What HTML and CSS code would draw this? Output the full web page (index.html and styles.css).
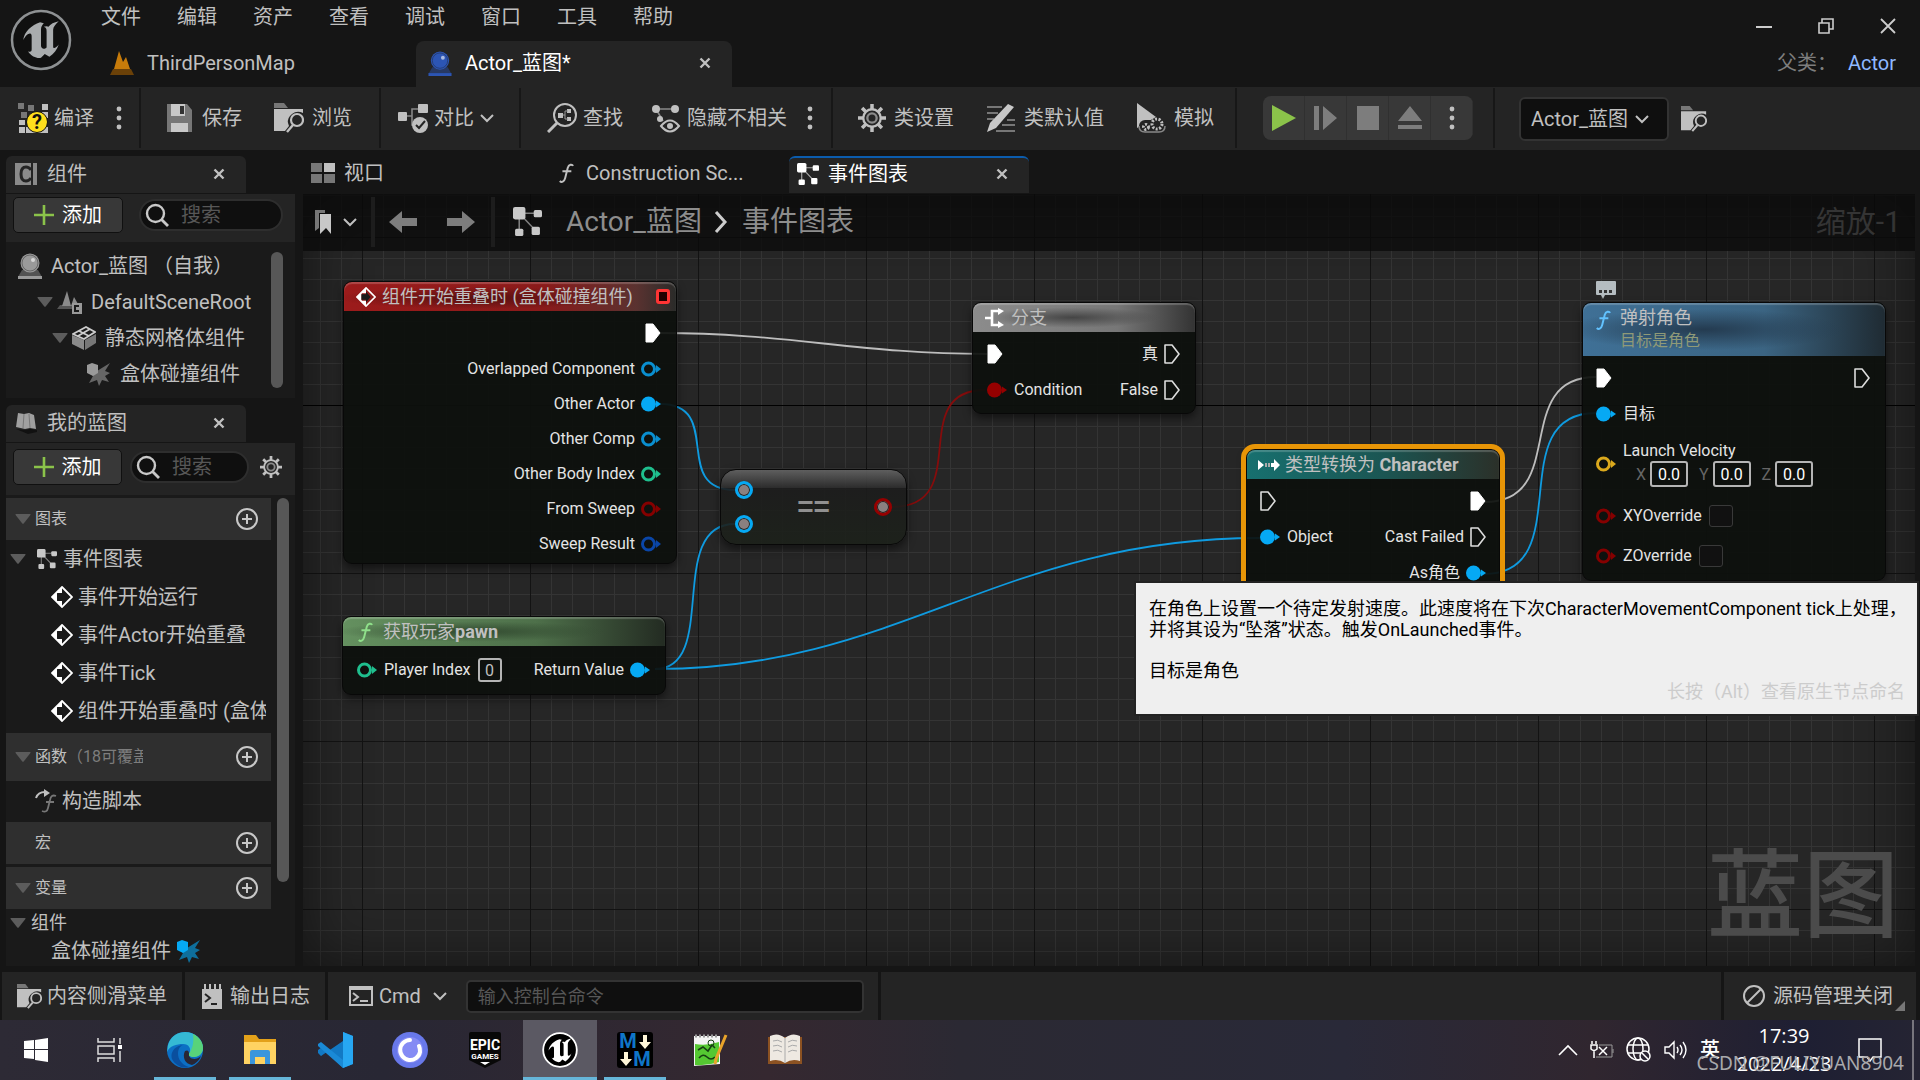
FILE: index.html
```html
<!DOCTYPE html>
<html lang="zh-CN">
<head>
  <meta charset="UTF-8" />
  <meta name="viewport" content="width=device-width, initial-scale=1.0"/>
  <title>Actor_蓝图</title>
  <link rel="stylesheet" href="styles.css">
</head>

<body>
  <!-- icons -->
  <svg class="defs" width="0" height="0" aria-hidden="true">
    <symbol id="i-x" viewBox="0 0 12 12"><path d="M1.5 1.5l9 9M10.5 1.5l-9 9" stroke="currentColor" stroke-width="2.4"/></symbol>
    <symbol id="i-down" viewBox="0 0 14 14"><path d="M1 4l6 6 6-6" fill="none" stroke="currentColor" stroke-width="2"/></symbol>
    <symbol id="i-tri" viewBox="0 0 16 10"><path d="M1 0h14q1 0 .4 1L8.700 9.500q-.7.700-1.400 0L.6 1Q0 0 1 0z" fill="#5c5c5c"/></symbol>
    <symbol id="i-dots" viewBox="0 0 6 24"><g fill="currentColor"><circle cx="3" cy="3" r="2.400"/><circle cx="3" cy="12" r="2.400"/><circle cx="3" cy="21" r="2.400"/></g></symbol>
    <symbol id="i-plus" viewBox="0 0 20 20"><path d="M10 0v20M0 10h20" stroke="#8bc34a" stroke-width="2.600"/></symbol>
    <symbol id="i-add" viewBox="0 0 24 24"><circle cx="12" cy="12" r="10" fill="none" stroke="#c8c8c8" stroke-width="2"/><path d="M12 7v10M7 12h10" stroke="#c8c8c8" stroke-width="2"/></symbol>
    <symbol id="i-search" viewBox="0 0 24 24"><circle cx="10.500" cy="10.500" r="8.500" fill="none" stroke="#c8c8c8" stroke-width="2.400"/><path d="M16.500 16.500L23 23" stroke="#c8c8c8" stroke-width="2.800"/></symbol>
    <symbol id="i-gear" viewBox="0 0 24 24"><path d="M12 0v5M12 19v5M0 12h5M19 12h5M3.500 3.500l3.600 3.600M16.900 16.900l3.600 3.600M20.500 3.500l-3.600 3.600M7.100 16.900l-3.600 3.600" stroke="#c0c0c0" stroke-width="3"/><circle cx="12" cy="12" r="7.500" fill="none" stroke="#c0c0c0" stroke-width="2"/><circle cx="12" cy="12" r="4" fill="none" stroke="#8a8a8a" stroke-width="2"/></symbol>
    <symbol id="i-graph" viewBox="0 0 28 28"><path d="M6 6h17M6 6v17M6 6l16 17" stroke="currentColor" stroke-width="1.500" opacity=".6"/><g fill="currentColor"><rect x="0" y="0" width="12" height="12" rx="2"/><rect x="20" y="3" width="8" height="7" rx="1.500"/><rect x="2" y="21" width="8" height="7" rx="1.500"/><rect x="18" y="19" width="8" height="8" rx="1.500"/></g></symbol>
    <symbol id="i-folder" viewBox="0 0 30 30"><path d="M0 0h10l4 5H0z" fill="#777"/><path d="M0 6h29v4q-6-3-11 1-5 4-4 9l1 3-4 5H0z" fill="#c0c0c0"/><circle cx="23" cy="17" r="6" fill="none" stroke="#c0c0c0" stroke-width="2.200"/><path d="M19 22l-6 7" stroke="#c0c0c0" stroke-width="2.400"/></symbol>
    <symbol id="i-event" viewBox="0 0 22 22"><path d="M11 1l10 10-10 10L1 11z" fill="none" stroke="#fff" stroke-width="1.800"/><path d="M11 1v6H6v8h5v6L1 11z" fill="#fff"/><path d="M6 8h5V5l5 6-5 6v-3H6z" fill="#1a1a1a"/></symbol>
    <symbol id="i-func" viewBox="0 0 18 22"><path d="M17 3c-1-2-5-2-6 2L8 17c-1 4-4 5-6 3M5 9h10" fill="none" stroke="currentColor" stroke-width="2.200"/></symbol>
    <symbol id="i-hit" viewBox="0 0 24 24"><path d="M24 1l-5 8 5 2-5 3 4 6-7-2-3 6-2-6-8 3 4-7-4-5h8z" fill="currentColor" opacity=".6"/><path d="M1 3l5-2 6 2v8l-5 3-6-3z" fill="currentColor"/></symbol>
    <symbol id="i-actor" viewBox="0 0 24 26"><path d="M4 17l-4 7h24l-4-7" fill="currentColor" opacity=".45"/><circle cx="12" cy="10" r="9.500" fill="currentColor"/><circle cx="12" cy="10" r="8" fill="none" stroke="#1a1a1a" stroke-opacity=".4"/><circle cx="15" cy="7" r="2" fill="#fff" opacity=".6"/><path d="M0 23h24v3H0z" fill="currentColor"/></symbol>
    <symbol id="pin-on" viewBox="0 0 20 16"><circle cx="7.500" cy="8" r="7.500" fill="currentColor"/><path d="M15 4.500l5 3.500-5 3.500z" fill="currentColor"/></symbol>
    <symbol id="pin-off" viewBox="0 0 20 16"><circle cx="7.500" cy="8" r="6" fill="none" stroke="currentColor" stroke-width="3"/><path d="M15 4l5 4-5 4z" fill="currentColor"/></symbol>
    <symbol id="exec-on" viewBox="0 0 16 20"><path d="M1 1h7l7 9-7 9H1z" fill="#fff" stroke="#fff" stroke-linejoin="round"/></symbol>
    <symbol id="exec-off" viewBox="0 0 16 20"><path d="M1 1h7l7 9-7 9H1z" fill="none" stroke="#ddd" stroke-width="1.600" stroke-linejoin="round"/></symbol>
    <symbol id="i-ue" viewBox="0 0 60 60"><path d="M29 12c-9 3-17 10-18 19 2-4 5-7 7-7 2 0 2 2 2 4v13c0 3-2 3-4 2 4 6 10 8 14 7l4-4 5 3c5-3 8-7 10-13-3 4-6 5-6 2V20c0-3 3-6 6-9-5 1-9 3-11 6-1-1-3-1-5 0 3 1 3 3 3 5v17c-2 2-6 2-6-2V20c0-3 1-5 3-7z" fill="currentColor"/></symbol>
  </svg>

  <header class="titlebar">
    <svg class="logo" viewBox="0 0 62 62"><circle cx="31" cy="31" r="29" fill="#101010" stroke="#8e9193" stroke-width="2.500"/><svg x="3" y="1" width="56" height="58" color="#a9acae"><use href="#i-ue"/></svg></svg>
    <div class="title-main">
      <nav class="menu">
        <a href="#">文件</a><a href="#">编辑</a><a href="#">资产</a><a href="#">查看</a><a href="#">调试</a><a href="#">窗口</a><a href="#">工具</a><a href="#">帮助</a>
      </nav>
      <div class="doc-tabs">
        <div class="doc-tab">
          <svg width="24" height="24" viewBox="0 0 24 24"><path d="M0 24l3-6h18l3 6z" fill="#6b4108"/><path d="M4 18L9 0l4 11 3-5 4 12z" fill="#c77b0a"/></svg>
          <span>ThirdPersonMap</span>
        </div>
        <div class="doc-tab active">
          <svg class="blue" width="24" height="25"><use href="#i-actor"/></svg>
          <span>Actor_蓝图*</span>
          <button class="close" aria-label="关闭"><svg width="12" height="12"><use href="#i-x"/></svg></button>
        </div>
      </div>
    </div>
    <div class="title-side">
      <div class="win-buttons">
        <button aria-label="最小化"><svg width="16" height="16" viewBox="0 0 16 16"><path d="M0 9h16" stroke="#ccc" stroke-width="2"/></svg></button>
        <button aria-label="还原"><svg width="16" height="16" viewBox="0 0 16 16"><path d="M1 5h10v10H1zM4 5V1h11v10h-4" fill="none" stroke="#ccc" stroke-width="1.600"/></svg></button>
        <button aria-label="关闭窗口"><svg width="16" height="16" viewBox="0 0 16 16"><path d="M1 1l14 14M15 1L1 15" stroke="#ccc" stroke-width="1.800"/></svg></button>
      </div>
      <p class="parent">父类： <a href="#">Actor</a></p>
    </div>
  </header>

  <div class="toolbar">
    <div class="group first">
      <button class="tool"><svg width="30" height="30" viewBox="0 0 30 30"><g fill="#c0c0c0"><path d="M24 1h6v6h-6zM1 17h6v5H1zM1 24h6v6H1zM8 24h22v6H8zM24 9h6v6h-6z"/></g><g fill="#777"><path d="M0 0h6v6H0zM10 2h6v6h-6zM3 9h6v6H3z"/></g><circle cx="19" cy="19" r="10.500" fill="#ffdf1c" stroke="#111"/><text x="19" y="26" class="question">?</text></svg><span>编译</span></button>
      <button class="dots" aria-label="编译选项"><svg width="6" height="24"><use href="#i-dots"/></svg></button>
    </div>
    <div class="group file">
      <button class="tool"><svg width="30" height="30" viewBox="0 0 30 30"><path d="M3 1h20l5 6v22H3z" fill="#777"/><path d="M7 1h14v12H7zM7 20h17v9H7z" fill="#c8c8c8"/><path d="M16 3h4v8h-4z" fill="#333"/></svg><span>保存</span></button>
      <button class="tool"><svg width="30" height="30"><use href="#i-folder"/></svg><span>浏览</span></button>
    </div>
    <div class="group narrow">
      <button class="tool"><svg width="30" height="30" viewBox="0 0 30 30"><path d="M8 13h6V6h8M14 13v9h3" fill="none" stroke="#888" stroke-width="1.600"/><g fill="#c0c0c0"><rect y="9" width="9" height="9" rx="1"/><rect x="20" y="1" width="10" height="9" rx="1"/><circle cx="22" cy="22" r="8"/></g><path d="M18 22l3 3 6-7" fill="none" stroke="#242424" stroke-width="2"/></svg><span>对比</span><svg width="14" height="14"><use href="#i-down"/></svg></button>
    </div>
    <div class="group tight">
      <button class="tool"><svg width="30" height="30" viewBox="0 0 30 30"><circle cx="18" cy="12" r="11" fill="none" stroke="#c0c0c0" stroke-width="2"/><path d="M10 20L1 29" stroke="#c0c0c0" stroke-width="3"/><path d="M11 10h5v5h-5zM20 6h4v4h-4zM20 14h4v4h-4z" fill="#c0c0c0"/><path d="M16 12h2V8h3M18 12v4h3" stroke="#999" fill="none"/></svg><span>查找</span></button>
      <button class="tool"><svg width="30" height="30" viewBox="0 0 30 30"><path d="M5 6h18M5 6l7 12" stroke="#888" stroke-width="1.600"/><g fill="#c0c0c0"><circle cx="5" cy="6" r="4"/><circle cx="24" cy="6" r="4"/><circle cx="9" cy="16" r="3"/></g><path d="M10 23q9-11 18 0-9 11-18 0z" fill="#242424" stroke="#c0c0c0" stroke-width="2"/><circle cx="19" cy="23" r="3" fill="#c0c0c0"/></svg><span>隐藏不相关</span></button>
      <button class="dots" aria-label="隐藏选项"><svg width="6" height="24"><use href="#i-dots"/></svg></button>
    </div>
    <div class="group short">
      <button class="tool"><svg width="28" height="28"><use href="#i-gear"/></svg><span>类设置</span></button>
      <button class="tool"><svg width="30" height="30" viewBox="0 0 30 30"><path d="M1 4h15M1 10h11M1 16h7M16 22h13M21 17h8M10 28h19" stroke="#777" stroke-width="1.800"/><path d="M22 1l6 3L10 25l-9 4 3-9z" fill="#c8c8c8"/></svg><span>类默认值</span></button>
      <button class="tool"><svg width="30" height="30" viewBox="0 0 30 30"><path d="M1 0l19 14L1 25z" fill="#c0c0c0"/><rect x="3" y="17" width="26" height="13" rx="6" fill="#242424"/><path d="M3 23q0 6 6 6h14q6 0 6-6" fill="none" stroke="#888" stroke-width="1.500"/><g fill="none" stroke="#c0c0c0" stroke-width="3" stroke-dasharray="2 1.500"><circle cx="21" cy="21" r="5"/><circle cx="10" cy="24" r="2.500"/></g></svg><span>模拟</span></button>
    </div>
    <div class="group play">
      <div class="playbox">
        <button aria-label="播放"><svg width="26" height="26" viewBox="0 0 26 26"><path d="M1 0l24 13L1 26z" fill="#8bc34a"/></svg></button>
        <button aria-label="单步"><svg width="26" height="26" viewBox="0 0 26 26"><path d="M1 1h5v24H1zM10 1l14 12-14 12z" fill="#7d7d7d"/></svg></button>
        <button aria-label="停止"><svg width="26" height="26" viewBox="0 0 26 26"><path d="M2 1h22v24H2z" fill="#7d7d7d"/></svg></button>
        <button aria-label="弹出"><svg width="26" height="26" viewBox="0 0 26 26"><path d="M13 1l12 15H1zM1 20h24v4H1z" fill="#7d7d7d"/></svg></button>
        <button aria-label="播放选项"><svg width="6" height="26"><use href="#i-dots"/></svg></button>
      </div>
    </div>
    <div class="debug">
      <span class="select-wrap"><select aria-label="调试对象"><option>Actor_蓝图</option></select><svg width="14" height="14"><use href="#i-down"/></svg></span>
      <svg width="26" height="26"><use href="#i-folder"/></svg>
    </div>
  </div>

  <main class="workspace">
    <aside class="sidebar">
      <section>
        <div class="panel-tab">
          <svg width="22" height="22" viewBox="0 0 22 22"><path d="M0 0h22v22H0z" fill="#8a8a8a"/><path d="M16 7q-2-3-5-3-5 0-5 7t5 7q3 0 5-3" fill="none" stroke="#242424" stroke-width="3"/><path d="M17 0v22" stroke="#242424" stroke-width="2"/></svg>
          <h2>组件</h2>
          <button class="close" aria-label="关闭组件"><svg width="12" height="12"><use href="#i-x"/></svg></button>
        </div>
        <div class="panel-head">
          <button class="add"><svg width="20" height="20"><use href="#i-plus"/></svg>添加</button>
          <label class="search wide"><svg width="24" height="24"><use href="#i-search"/></svg><input type="text" placeholder="搜索" aria-label="搜索组件"></label>
        </div>
        <div class="panel-body components">
          <ul class="tree">
            <li class="l0"><svg class="grey" width="24" height="26"><use href="#i-actor"/></svg>Actor_蓝图 （自我）</li>
            <li class="l1"><svg class="tri" width="16" height="10"><use href="#i-tri"/></svg><svg width="25" height="24" viewBox="0 0 25 24"><path d="M0 19l3-4h14l3 4z" fill="#555"/><path d="M5 16L10 1l4 15zM14 16l3-9 4 7z" fill="#8a8a8a"/><path d="M15 13h10v11H15z" fill="#999"/><path d="M22 16h-4v5h4" fill="none" stroke="#1a1a1a" stroke-width="2"/></svg>DefaultSceneRoot</li>
            <li class="l2"><svg class="tri" width="16" height="10"><use href="#i-tri"/></svg><svg width="24" height="24" viewBox="0 0 24 24"><path d="M0 9l12 5v10L0 18z" fill="#8a8a8a"/><path d="M24 8l-11 6v10l11-7z" fill="#777"/><path d="M1 8l13-7 9 5-11 7zM7 5l10 5M6 10l12-7" fill="none" stroke="#ccc" stroke-width="1.800"/></svg>静态网格体组件</li>
            <li class="l3"><svg class="grey" width="24" height="24"><use href="#i-hit"/></svg>盒体碰撞组件</li>
          </ul>
          <div class="scrollbar"></div>
        </div>
      </section>

      <section class="blueprint">
        <div class="panel-tab">
          <svg width="22" height="22" viewBox="0 0 22 22"><path d="M3 1l6 1 5-1 5 2 2 14-6-1-5 1-9-2z" fill="#a0a0a0"/><path d="M9 2L8 16M14 2l1 14" stroke="#777"/><path d="M1 17l9 1 5-1 7 1v2l-9 2z" fill="#111"/></svg>
          <h2>我的蓝图</h2>
          <button class="close" aria-label="关闭我的蓝图"><svg width="12" height="12"><use href="#i-x"/></svg></button>
        </div>
        <div class="panel-head tall">
          <button class="add"><svg width="20" height="20"><use href="#i-plus"/></svg>添加</button>
          <label class="search"><svg width="24" height="24"><use href="#i-search"/></svg><input type="text" placeholder="搜索" aria-label="搜索蓝图"></label>
          <button class="icon-btn" aria-label="设置"><svg width="22" height="22"><use href="#i-gear"/></svg></button>
        </div>
        <div class="panel-body list">
          <div class="list-main">
            <div class="cat"><svg class="tri" width="16" height="10"><use href="#i-tri"/></svg><h3>图表</h3><button class="icon-btn" aria-label="添加图表"><svg width="24" height="24"><use href="#i-add"/></svg></button></div>
            <ul>
              <li class="root"><svg class="tri" width="16" height="10"><use href="#i-tri"/></svg><svg class="light" width="22" height="20"><use href="#i-graph"/></svg>事件图表</li>
              <li><svg width="22" height="22"><use href="#i-event"/></svg>事件开始运行</li>
              <li><svg width="22" height="22"><use href="#i-event"/></svg>事件Actor开始重叠</li>
              <li><svg width="22" height="22"><use href="#i-event"/></svg>事件Tick</li>
              <li><svg width="22" height="22"><use href="#i-event"/></svg><span class="clip">组件开始重叠时 (盒体碰撞组件)</span></li>
            </ul>
            <div class="cat high"><svg class="tri" width="16" height="10"><use href="#i-tri"/></svg><h3>函数</h3><span class="sub">（18可覆盖）</span><button class="icon-btn" aria-label="添加函数"><svg width="24" height="24"><use href="#i-add"/></svg></button></div>
            <ul>
              <li class="fn"><svg width="22" height="24" viewBox="0 0 22 24"><path d="M1 9q2-6 9-6" fill="none" stroke="#c0c0c0" stroke-width="2"/><path d="M9 0l6 4-6 4z" fill="#c0c0c0"/><path d="M21 7q-5-2-6 4l-2 8q-1 5-6 3M11 13h8" fill="none" stroke="#777" stroke-width="1.800"/></svg>构造脚本</li>
            </ul>
            <div class="cat"><span class="tri"></span><h3>宏</h3><button class="icon-btn" aria-label="添加宏"><svg width="24" height="24"><use href="#i-add"/></svg></button></div>
            <div class="cat spaced"><svg class="tri" width="16" height="10"><use href="#i-tri"/></svg><h3>变量</h3><button class="icon-btn" aria-label="添加变量"><svg width="24" height="24"><use href="#i-add"/></svg></button></div>
            <ul class="vars">
              <li class="root"><svg class="tri" width="16" height="10"><use href="#i-tri"/></svg>组件</li>
              <li>盒体碰撞组件<svg class="cyan" width="24" height="24"><use href="#i-hit"/></svg></li>
            </ul>
          </div>
          <div class="scrollbar"></div>
        </div>
      </section>
    </aside>

    <section class="editor">
      <div class="editor-tabs">
        <div class="etab"><svg width="24" height="20" viewBox="0 0 24 20"><path d="M0 0h11v9H0zM0 11h11v9H0zM13 11h11v9H13z" fill="#777"/><path d="M13 0h11v9H13z" fill="#c0c0c0"/></svg><span>视口</span></div>
        <div class="etab"><svg width="16" height="22"><use href="#i-func"/></svg><span>Construction Sc...</span></div>
        <div class="etab active"><svg width="22" height="22"><use href="#i-graph"/></svg><span>事件图表</span><button class="close" aria-label="关闭事件图表"><svg width="12" height="12"><use href="#i-x"/></svg></button></div>
      </div>

      <div class="graph">
        <div class="canvas">
          <svg class="wires" width="1617" height="772" fill="none" stroke-width="1.800">
            <g transform="translate(-303 -194)">
              <path d="M660 333C790 333 857 354 987 354" stroke="#bdbdbd"/>
              <path d="M660 404C725 404 670 490 735 490" stroke="#0f9be0"/>
              <path d="M655 669C720 669 665 524 735 524" stroke="#0f9be0"/>
              <path d="M655 669C900 669 1000 538 1260 538" stroke="#0f9be0"/>
              <path d="M892 507C975 507 905 390 985 390" stroke="#850c0c"/>
              <path d="M1485 502C1570 502 1510 377 1596 377" stroke="#bdbdbd"/>
              <path d="M1484 574C1580 574 1500 413 1596 413" stroke="#0f9be0"/>
            </g>
          </svg>
          <div class="vignette"></div>
          <div class="watermark">蓝图</div>

          <article class="node overlap">
            <h4 class="red"><svg width="20" height="20"><use href="#i-event"/></svg>组件开始重叠时 (盒体碰撞组件)<i class="delegate"></i></h4>
            <div class="row out"><svg width="16" height="20"><use href="#exec-on"/></svg></div>
            <div class="row out low">Overlapped Component<svg class="obj" width="20" height="16"><use href="#pin-off"/></svg></div>
            <div class="row out low">Other Actor<svg class="obj on" width="20" height="16"><use href="#pin-on"/></svg></div>
            <div class="row out low">Other Comp<svg class="obj" width="20" height="16"><use href="#pin-off"/></svg></div>
            <div class="row out low">Other Body Index<svg class="int" width="20" height="16"><use href="#pin-off"/></svg></div>
            <div class="row out low">From Sweep<svg class="bool" width="20" height="16"><use href="#pin-off"/></svg></div>
            <div class="row out low">Sweep Result<svg class="struct" width="20" height="16"><use href="#pin-off"/></svg></div>
          </article>

          <article class="node equal">
            <div class="eq-pins"><i class="dot"></i><i class="dot"></i></div>
            <b>==</b>
            <i class="dot bad"></i>
          </article>

          <article class="node pawn">
            <h4 class="green"><svg width="16" height="20"><use href="#i-func"/></svg><span>获取玩家<b>pawn</b></span></h4>
            <div class="row">
              <label class="in"><svg class="int" width="20" height="16"><use href="#pin-off"/></svg>Player Index <input class="num one" type="text" value="0"></label>
              <span class="end">Return Value<svg class="obj on" width="20" height="16"><use href="#pin-on"/></svg></span>
            </div>
          </article>

          <article class="node branch">
            <h4 class="gray"><svg width="20" height="20" viewBox="0 0 20 20"><path d="M0 10h7M15 3H7v14h8" fill="none" stroke="#fff" stroke-width="2.600"/><path d="M13 0l6 3-6 4zM13 13l6 4-6 3z" fill="#fff"/></svg>分支</h4>
            <div class="row"><svg width="16" height="20"><use href="#exec-on"/></svg><span class="end">真<svg width="16" height="20"><use href="#exec-off"/></svg></span></div>
            <div class="row"><span class="in"><svg class="bool on" width="20" height="16"><use href="#pin-on"/></svg>Condition</span><span class="end">False<svg width="16" height="20"><use href="#exec-off"/></svg></span></div>
          </article>

          <article class="node cast">
            <h4 class="teal"><svg width="22" height="12" viewBox="0 0 22 12"><path d="M0 1l6 5-6 5zM13 4h3V0l6 6-6 6V8h-3z" fill="#fff"/><path d="M7 4h2v4H7zM10 4h2v4h-2z" fill="#aaa"/></svg><span>类型转换为 <b>Character</b></span></h4>
            <div class="row"><svg width="16" height="20"><use href="#exec-off"/></svg><span class="end"><svg width="16" height="20"><use href="#exec-on"/></svg></span></div>
            <div class="row"><span class="in"><svg class="obj on" width="20" height="16"><use href="#pin-on"/></svg>Object</span><span class="end">Cast Failed<svg width="16" height="20"><use href="#exec-off"/></svg></span></div>
            <div class="row"><span class="end">As角色<svg class="obj on" width="20" height="16"><use href="#pin-on"/></svg></span></div>
          </article>

          <svg class="bubble" width="20" height="18" viewBox="0 0 20 18"><path d="M1 0h18q1 0 1 1v12q0 1-1 1H9l-2 4-2-4H1q-1 0-1-1V1q0-1 1-1z" fill="#b4bcc0"/><path d="M3 9h3v3H3zM8 9h3v3H8zM13 9h3v3h-3z" fill="#333"/></svg>
          <article class="node launch">
            <h4 class="blue-head"><svg width="16" height="20"><use href="#i-func"/></svg><span>弹射角色<small>目标是角色</small></span></h4>
            <div class="row"><svg width="16" height="20"><use href="#exec-on"/></svg><span class="end"><svg width="16" height="20"><use href="#exec-off"/></svg></span></div>
            <div class="row"><span class="in"><svg class="obj on" width="20" height="16"><use href="#pin-on"/></svg>目标</span></div>
            <div class="row vec">
              <svg class="vector" width="20" height="16"><use href="#pin-off"/></svg>
              <div>
                <span>Launch Velocity</span>
                <div class="xyz"><label>X <input class="num" type="text" value="0.0"></label><label>Y <input class="num" type="text" value="0.0"></label><label>Z <input class="num" type="text" value="0.0"></label></div>
              </div>
            </div>
            <div class="row check"><label class="in"><svg class="bool" width="20" height="16"><use href="#pin-off"/></svg>XYOverride<input type="checkbox"></label></div>
            <div class="row check"><label class="in"><svg class="bool" width="20" height="16"><use href="#pin-off"/></svg>ZOverride<input type="checkbox"></label></div>
          </article>
        </div>

        <div class="crumbs">
          <button class="crumb-btn" aria-label="书签"><svg width="16" height="24" viewBox="0 0 16 24"><path d="M0 0h10v3H4v15l-4 3z" fill="#777"/><path d="M5 4h11v20l-5-6-6 6z" fill="#c8c8c8"/></svg><svg width="14" height="14"><use href="#i-down"/></svg></button>
          <button class="crumb-btn arrows" aria-label="后退"><svg width="28" height="22" viewBox="0 0 28 22"><path d="M0 11L13 0v7h15v8H13v7z" fill="#7d7d7d"/></svg></button>
          <button class="crumb-btn" aria-label="前进"><svg width="28" height="22" viewBox="0 0 28 22"><path d="M28 11L15 0v7H0v8h15v7z" fill="#7d7d7d"/></svg></button>
          <div class="path">
            <svg width="33" height="29"><use href="#i-graph"/></svg>
            <a href="#">Actor_蓝图</a>
            <svg width="14" height="22" viewBox="0 0 14 22"><path d="M2 1l9 10-9 10" fill="none" stroke="#ccc" stroke-width="3"/></svg>
            <a href="#">事件图表</a>
          </div>
          <span class="zoom">缩放-1</span>
        </div>

        <div class="tooltip" role="tooltip">
          <p>在角色上设置一个待定发射速度。此速度将在下次CharacterMovementComponent tick上处理，<br>并将其设为“坠落”状态。触发OnLaunched事件。</p>
          <p>目标是角色</p>
          <p class="hint">长按（Alt）查看原生节点命名</p>
        </div>
      </div>
    </section>
  </main>

  <footer class="status">
    <button class="seg drawer"><svg width="25" height="25"><use href="#i-folder"/></svg>内容侧滑菜单</button>
    <button class="seg log"><svg width="20" height="25" viewBox="0 0 20 25"><path d="M0 5h2V0h2v5h3V0h2v5h3V0h2v5h3V0h2v5h1v20H0z" fill="#c0c0c0"/><path d="M3 10l5 4-5 4M9 20h6" fill="none" stroke="#242424" stroke-width="2"/></svg>输出日志</button>
    <div class="seg cmd">
      <button><svg width="24" height="20" viewBox="0 0 24 20"><path d="M1 1h22v18H1zM1 3h22" fill="none" stroke="#c0c0c0" stroke-width="2"/><path d="M4 7l5 4-5 4M11 15h8" fill="none" stroke="#c0c0c0" stroke-width="2"/></svg>Cmd<svg class="gap" width="14" height="14"><use href="#i-down"/></svg></button>
      <input type="text" placeholder="输入控制台命令" aria-label="控制台命令">
    </div>
    <div class="seg fill"></div>
    <button class="seg source"><svg width="24" height="24" viewBox="0 0 24 24"><circle cx="12" cy="12" r="10" fill="none" stroke="#c0c0c0" stroke-width="2"/><path d="M5 19L19 5" stroke="#c0c0c0" stroke-width="2"/></svg>源码管理关闭<i></i></button>
  </footer>

  <div class="taskbar">
    <button aria-label="开始"><svg width="24" height="24" viewBox="0 0 24 24"><path d="M0 3l10-1v9H0zM11 2l13-2v11H11zM0 12h10v9L0 20zM11 12h13v12l-13-2z" fill="#fff"/></svg></button>
    <button aria-label="任务视图"><svg width="26" height="26" viewBox="0 0 26 26"><path d="M1 1v4h16V1M1 25v-4h16v4M1 9h16v8H1zM23 1v6M23 14v11" fill="none" stroke="#ddd" stroke-width="1.500"/><path d="M21 8h4v4h-4z" fill="#fff"/></svg></button>
    <button class="open" aria-label="Edge"><svg width="36" height="36" viewBox="0 0 36 36"><circle cx="18" cy="18" r="18" fill="#0c6fc4"/><path d="M1 13C4 3 12 0 18 0c10 0 18 7 18 16 0 5-4 9-9 9-4 0-6-2-5-3 3-5 0-10-6-10C10 12 2 14 0 20z" fill="#35b9d4"/><path d="M26 2c6 3 10 8 10 14 0 5-4 9-9 9-4 0-6-2-5-3 4-6 5-13 4-20z" fill="#58d37a"/><path d="M16 13c-7 2-8 18 6 22-7 2-14-2-17-8-2-6 2-13 11-14z" fill="#0a4f9e"/><path d="M22 22c-1 5 7 7 12 2-2 5-6 8-9 9-7-1-10-8-7-14q4-2 4 3z" fill="#292634"/></svg></button>
    <button class="open" aria-label="文件资源管理器"><svg width="34" height="30" viewBox="0 0 34 30"><path d="M1 0h12l3 4h17v10H1z" fill="#e3a11a"/><path d="M1 7h32v22H1z" fill="#ffd362"/><path d="M7 29V17q0-2 2-2h16q2 0 2 2v12h-5v-7H12v7z" fill="#3a96dd"/></svg></button>
    <button aria-label="VS Code"><svg width="36" height="36" viewBox="0 0 36 36"><path d="M26 0l10 4v28l-10 4L5 15l-4 3v3l3 3L26 9v18z" fill="#1279c4"/><path d="M26 0l10 4v28l-10 4z" fill="#27a7f2"/><path d="M1 12l3-2 22 18v8L1 14z" fill="#1a8ad6"/></svg></button>
    <button aria-label="浏览器"><svg width="36" height="36" viewBox="0 0 36 36"><circle cx="18" cy="18" r="18" fill="#6878ea"/><circle cx="18" cy="18" r="13" fill="#858bf4"/><path d="M18 8a10 10 0 1 0 10 12q0-4-1-6" fill="none" stroke="#fff" stroke-width="4" stroke-linecap="round"/></svg></button>
    <button aria-label="Epic Games"><svg width="32" height="36" viewBox="0 0 32 36"><path d="M2 0h28q2 0 2 2v26L16 36 0 28V2q0-2 2-2z" fill="#080808"/><text x="16" y="18" class="epic">EPIC</text><text x="16" y="27" class="games">GAMES</text><path d="M11 30h10l-5 3z" fill="#fff"/></svg></button>
    <button class="open current" aria-label="Unreal Editor"><svg width="36" height="36" viewBox="0 0 60 60" color="#fff"><circle cx="30" cy="30" r="28" fill="#000" stroke="#fff" stroke-width="3"/><use href="#i-ue"/></svg></button>
    <button class="open" aria-label="Markdown"><svg width="36" height="36" viewBox="0 0 36 36"><rect width="36" height="36" rx="3" fill="#000"/><text x="11" y="16" class="mm">M</text><text x="25" y="34" class="mm">M</text><path d="M26 3h4v7h4l-6 7-6-7h4zM7 20h4v7h4l-6 7-6-7h4z" fill="#fff6d8"/></svg></button>
    <button aria-label="Notepad++"><svg width="36" height="36" viewBox="0 0 36 36"><path d="M2 4h26v28L2 34z" fill="#f4f4f4"/><path d="M3 12q12 2 24-2v20q-12 4-24 3z" fill="#55c832"/><path d="M6 18l5-3 5 4 4-6 3 3M7 26q4-5 8-1t8 0" fill="none" stroke="#163e12" stroke-width="1.600"/><circle cx="19" cy="11" r="3" fill="none" stroke="#163e12"/><path d="M3 4h24" stroke="#999" stroke-width="3" stroke-dasharray="2 2"/><path d="M34 3L24 27l-1 5" stroke="#e8a32a" stroke-width="3"/></svg></button>
    <button aria-label="阅读"><svg width="36" height="32" viewBox="0 0 36 32"><path d="M1 3v27h34V3" fill="#8c5222"/><path d="M3 2q8-4 15 2v25q-7-5-15-2zM33 2q-8-4-15 2v25q7-5 15-2z" fill="#eee9e2"/><path d="M6 7q5-2 9 1M6 12q5-2 9 1M6 17q5-2 9 1M21 8q4-3 9-1M21 13q4-3 9-1M21 18q4-3 9-1M18 4v25" fill="none" stroke="#aaa"/></svg></button>

    <div class="tray">
      <svg width="20" height="12" viewBox="0 0 20 12"><path d="M1 11l9-9 9 9" fill="none" stroke="#fff" stroke-width="1.600"/></svg>
      <svg width="24" height="18" viewBox="0 0 24 18"><path d="M2 0v3M6 0v3M1 4h6v4q-3 3-6 0zM4 9v8" fill="none" stroke="#fff" stroke-width="1.500"/><path d="M9 4h13v12H6M23 8v4" fill="none" stroke="#999"/><path d="M9 6l8 8M17 6l-8 8" stroke="#fff" stroke-width="1.500"/></svg>
      <svg width="26" height="26" viewBox="0 0 26 26"><g fill="none" stroke="#fff" stroke-width="1.500"><circle cx="12" cy="12" r="11"/><ellipse cx="12" cy="12" rx="5" ry="11"/><path d="M2 8h20M2 16h14"/><circle cx="19" cy="19" r="5" fill="#2a2533"/><path d="M16 16l6 6"/></g></svg>
      <svg width="24" height="20" viewBox="0 0 24 20"><path d="M1 7h4l5-5v16l-5-5H1zM13 7q2 3 0 6M16 5q4 5 0 10M19 2q6 8 0 16" fill="none" stroke="#fff" stroke-width="1.400"/></svg>
      <b>英</b>
      <time>17:39<br>2022/4/23</time>
      <svg class="notice" width="24" height="24" viewBox="0 0 24 24"><path d="M1 1h22v18h-8l-3 4-3-4H1z" fill="none" stroke="#fff" stroke-width="1.500"/></svg>
    </div>
    <span class="credit">CSDN @FULIYUAN8904</span>
  </div>
</body>
</html>
```

FILE: styles.css
```css
* {
  box-sizing: border-box;
}

body {
  margin: 0;
  height: 100vh;
  display: flex;
  flex-direction: column;
  overflow: hidden;
  background: #151515;
  color: #c0c0c0;
  font: 20px/24px Roboto, "Noto Sans CJK SC", sans-serif;
}

h2, h3, h4, p, ul {
  margin: 0;
  padding: 0;
  font-weight: normal;
}

ul {
  list-style: none;
}

a {
  color: inherit;
  text-decoration: none;
}

button, input, select {
  margin: 0;
  padding: 0;
  border: 0;
  background: none;
  color: inherit;
  font: inherit;
}

button {
  display: flex;
  align-items: center;
  justify-content: center;
}

svg {
  flex: none;
}

.defs {
  position: absolute;
}

/* title bar */
.titlebar {
  display: flex;
  height: 87px;
  flex: none;
}

.logo {
  width: 62px;
  height: 62px;
  margin: 9px 10px;
}

.title-main {
  flex: 1;
  display: flex;
  flex-direction: column;
  justify-content: space-between;
}

.menu {
  display: flex;
  gap: 36px;
  padding: 5px 0 0 19px;
}

.doc-tabs {
  display: flex;
  height: 46px;
}

.doc-tab {
  display: flex;
  align-items: center;
  gap: 13px;
  width: 306px;
  padding: 0 28px 2px;
}

.doc-tab.active {
  width: 316px;
  margin-left: 28px;
  padding: 0 20px 2px 12px;
  background: #242424;
  border-radius: 8px 8px 0 0;
  color: #fff;
}

.blue {
  color: #2c55b4;
}

.close {
  width: 14px;
  height: 24px;
  margin-left: auto;
  color: #c0c0c0;
}

.title-side {
  padding: 16px 24px 0 0;
}

.win-buttons {
  display: flex;
  justify-content: flex-end;
  gap: 46px;
  height: 20px;
}

.parent {
  margin-top: 15px;
  color: #7d7d7d;
  text-align: right;
}

.parent a {
  margin-left: 6px;
  color: #8fb8ff;
}

/* toolbar */
.toolbar {
  display: flex;
  flex: none;
  height: 63px;
  background: #242424;
}

.group {
  display: flex;
  margin: 1px 0 2px;
  border-right: 2px solid #171717;
}

.tool {
  gap: 8px;
  padding: 0 16px;
}

.dots {
  width: 18px;
}

.first {
  padding: 0 11px 0 2px;
}

.first .tool,
.narrow .tool,
.tight .tool {
  gap: 6px;
}

.file {
  padding: 0 11px 0 7px;
}

.narrow {
  padding: 0 9px 0 1px;
}

.tight .tool {
  padding: 0 14px;
}

.tight {
  padding: 0 12px;
}

.short {
  padding: 0 5px 0 9px;
}

.play {
  padding: 8px 20px 8px 26px;
}

.playbox {
  display: flex;
  height: 44px;
  border-radius: 8px;
  background: #383838;
  overflow: hidden;
}

.playbox button {
  width: 42px;
  border-right: 1px solid #303030;
}

.question {
  fill: #111;
  font: bold 20px Roboto, sans-serif;
  text-anchor: middle;
}

.debug {
  display: flex;
  align-items: center;
  gap: 12px;
  padding-left: 24px;
}

.select-wrap {
  display: flex;
  align-items: center;
  width: 150px;
  height: 44px;
  padding-left: 10px;
  background: #0f0f0f;
  border: 2px solid #333;
  border-radius: 6px;
}

.select-wrap select {
  appearance: none;
  width: 104px;
}

/* left side */
.workspace {
  flex: 1;
  min-height: 0;
  display: flex;
  gap: 8px;
  padding: 6px 5px 6px 6px;
}

.sidebar {
  width: 289px;
  flex: none;
  display: flex;
  flex-direction: column;
  gap: 7px;
}

.panel-tab {
  display: flex;
  align-items: center;
  gap: 10px;
  width: 240px;
  height: 37px;
  margin-bottom: 1px;
  padding: 0 20px 2px 9px;
  background: #242424;
  border-radius: 6px 6px 0 0;
}

.panel-tab h2 {
  font-size: 20px;
}

.panel-head {
  display: flex;
  align-items: flex-start;
  gap: 8px;
  height: 48px;
  padding: 3px 12px 0 7px;
  background: #242424;
}

.panel-head.tall {
  height: 52px;
  padding-top: 6px;
}

.add {
  width: 110px;
  height: 36px;
  gap: 8px;
  background: #383838;
  border: 1px solid #101010;
  border-radius: 5px;
  color: #fff;
}

.search {
  display: flex;
  align-items: center;
  width: 120px;
  height: 32px;
  margin-top: 2px;
  padding: 0 4px;
  background: #0f0f0f;
  border: 2px solid #2e2e2e;
  border-radius: 16px;
}

.search.wide {
  width: 144px;
  margin-left: auto;
}

.search input {
  width: 70px;
  margin-left: 12px;
  height: 24px;
}

.tall .icon-btn {
  width: 24px;
  height: 36px;
  margin-left: 2px;
}

input::placeholder {
  color: #575757;
  opacity: 1;
}

.panel-body {
  display: flex;
  background: #1a1a1a;
}

.components {
  height: 156px;
  padding: 6px 12px 6px 0;
}

.tree {
  flex: 1;
}

.tree li {
  display: flex;
  align-items: center;
  gap: 9px;
  height: 36px;
  white-space: nowrap;
}

.tree li .tri {
  margin-right: -5px;
}

.l0 { padding-left: 12px; }
.l1 { padding-left: 31px; }
.l2 { padding-left: 46px; }

.tree .l3 {
  gap: 10px;
  padding-left: 80px;
}

.grey {
  color: #9a9a9a;
}

.cyan {
  color: #06a9f4;
}

.light {
  color: #c8c8c8;
}

.scrollbar {
  width: 12px;
  height: 136px;
  margin-top: 4px;
  background: #575757;
  border-radius: 6px;
}

.blueprint {
  flex: 1;
  min-height: 0;
  display: flex;
  flex-direction: column;
}

.list {
  flex: 1;
  min-height: 0;
  gap: 6px;
  padding-top: 3px;
  overflow: hidden;
}

.list .scrollbar {
  height: 384px;
  margin-top: 0;
}

.list-main {
  width: 265px;
}

.cat {
  display: flex;
  align-items: center;
  height: 42px;
  padding: 0 12px 0 9px;
  background: #2f2f2f;
}

.cat h3, .sub {
  font-size: 16px;
}

.cat .tri {
  width: 16px;
  margin-right: 4px;
}

.cat .icon-btn {
  margin-left: auto;
}

.cat.high {
  height: 48px;
  margin-top: 3px;
}

.cat.spaced {
  margin-top: 3px;
}

.sub {
  width: 76px;
  overflow: hidden;
  white-space: nowrap;
  color: #7d7d7d;
}

.list li {
  display: flex;
  align-items: center;
  gap: 5px;
  height: 38px;
  padding-left: 45px;
  white-space: nowrap;
}

.list .root {
  padding-left: 4px;
}

.root .tri {
  margin-right: 5px;
}

.list .fn {
  height: 40px;
  margin-bottom: 1px;
  padding-left: 29px;
}

.clip {
  width: 188px;
  overflow: hidden;
}

.list .vars li {
  height: 28px;
}

.vars .root {
  gap: 0;
  font-size: 18px;
}

/* graph editor */
.editor {
  flex: 1;
  min-width: 0;
  display: flex;
  flex-direction: column;
}

.editor-tabs {
  display: flex;
  height: 38px;
}

.etab {
  display: flex;
  align-items: center;
  gap: 9px;
  width: 240px;
  height: 37px;
  margin-right: 3px;
  padding: 0 20px 4px 8px;
  border-radius: 6px 6px 0 0;
}

.etab.active {
  background: #242424;
  border-top: 2px solid #0b5cad;
  color: #fff;
}

.etab:nth-child(2) {
  gap: 12px;
  padding-left: 12px;
}

.graph {
  flex: 1;
  min-height: 0;
  position: relative;
}

/* 21px cells, every eighth line is dark */
.canvas {
  position: absolute;
  inset: 0;
  overflow: hidden;
  background-color: #262626;
  background-image:
    linear-gradient(#000, #000),
    linear-gradient(90deg, #131313 1px, transparent 1px),
    linear-gradient(#131313 1px, transparent 1px),
    linear-gradient(90deg, #343434 1px, transparent 1px),
    linear-gradient(#343434 1px, transparent 1px);
  background-size: 100% 1px, 168px 168px, 168px 168px, 21px 21px, 21px 21px;
  background-position: 0 211px, 59px 0, 0 43px, 17px 0, 0 1px;
  background-repeat: no-repeat, repeat, repeat, repeat, repeat;
}

.wires {
  position: absolute;
  left: 0;
  top: 0;
}

.vignette {
  position: absolute;
  inset: 0;
  box-shadow: inset 0 0 60px rgba(0, 0, 0, .5);
}

.watermark {
  position: absolute;
  right: 16px;
  bottom: 20px;
  color: #4b4b4b;
  font-size: 96px;
  font-weight: 500;
  line-height: 100px;
}

.crumbs {
  position: absolute;
  left: 0;
  right: 0;
  top: 0;
  display: flex;
  align-items: center;
  height: 57px;
  padding: 0 14px 2px 12px;
  background: rgba(10, 10, 10, .75);
  color: #8d8d8d;
  font-size: 28px;
}

.crumb-btn {
  gap: 12px;
  height: 50px;
  color: #c0c0c0;
}

.arrows {
  margin: 0 30px 0 14px;
  padding-left: 14px;
  border-left: 4px solid #1d1d1d;
}

.path {
  display: flex;
  align-items: center;
  gap: 14px;
  height: 50px;
  margin-left: 16px;
  padding-left: 16px;
  border-left: 4px solid #1d1d1d;
}

.path svg {
  color: #c8c8c8;
}

.path a:first-of-type {
  margin: 0 -2px 0 8px;
}

.zoom {
  margin-left: auto;
  color: #343434;
  font-size: 30px;
}

/* nodes */
.node {
  position: absolute;
  background: rgba(13, 16, 13, .93);
  border: 1px solid #080808;
  border-radius: 9px;
  box-shadow: 0 4px 8px rgba(0, 0, 0, .5);
  color: #e4e4e4;
  font-size: 16px;
  line-height: 20px;
}

.node h4 {
  display: flex;
  align-items: center;
  gap: 6px;
  height: 29px;
  margin-bottom: 4px;
  padding: 0 12px;
  border-radius: 8px 8px 0 0;
  box-shadow: inset 0 2px 1px rgba(255, 255, 255, .2);
  color: #c0c0c0;
  font-size: 18px;
  white-space: nowrap;
}

.node .red {
  background: radial-gradient(ellipse at 40% 55%, rgba(60, 12, 12, .7), transparent 50%), linear-gradient(90deg, #9c1b1b, #8a1a1a 60%, #5a3230 88%, #2a2b29);
}

.node .green {
  gap: 10px;
  padding-left: 14px;
  background: radial-gradient(ellipse at 40% 50%, #324a30, transparent 50%), linear-gradient(90deg, #64905f, #4e704a 60%, #232b22);
}

.node .green svg {
  color: #8fe08a;
}

.node .gray {
  background: radial-gradient(ellipse at 45% 50%, #454545, transparent 50%), linear-gradient(90deg, #8c8c8c, #777 65%, #333);
}

.node .teal {
  gap: 5px;
  padding-left: 11px;
  background: linear-gradient(90deg, #17706f, #1b5552 55%, #2b3029);
}

.node .blue-head {
  gap: 9px;
  height: 53px;
  background: radial-gradient(ellipse at 40% 50%, #243b50, transparent 55%), linear-gradient(90deg, #3f7096, #3b6482 60%, #1f2b33);
}

.node .blue-head svg {
  align-self: flex-start;
  margin-top: 7px;
  color: #62c2ff;
}

.blue-head small {
  display: block;
  margin-top: 3px;
  color: #8f9a78;
  font-size: 16px;
}

.row {
  display: flex;
  align-items: center;
  height: 36px;
  padding: 0 15px 0 14px;
}

.row.low {
  height: 35px;
}

.row.out {
  justify-content: flex-end;
  gap: 6px;
}

.in, .end {
  display: flex;
  align-items: center;
  gap: 7px;
}

.end {
  gap: 6px;
  margin-left: auto;
}

.obj { color: #0a8fd0; }
.obj.on { color: #06a9f4; }
.int { color: #1fbf8e; }
.bool { color: #850000; }
.bool.on { color: #950000; }
.struct { color: #0a46a8; }
.vector { color: #dba91d; }

.overlap {
  left: 40px;
  top: 87px;
  width: 334px;
  height: 283px;
}

.delegate {
  width: 14px;
  height: 15px;
  margin-left: auto;
  margin-right: -6px;
  border: 3px solid #ff3434;
  border-radius: 3px;
  background: #200;
}

.equal {
  left: 417px;
  top: 275px;
  display: flex;
  align-items: center;
  justify-content: space-between;
  width: 187px;
  height: 76px;
  padding: 0 14px;
  border-radius: 16px;
  background: linear-gradient(rgba(100, 100, 100, .9), rgba(45, 45, 45, .9) 24%, rgba(28, 28, 28, .9) 25%, rgba(28, 33, 26, .9));
}

.equal b {
  color: #909090;
  font: bold 28px "Liberation Sans", sans-serif;
}

.eq-pins {
  display: flex;
  flex-direction: column;
  gap: 16px;
}

.dot {
  width: 18px;
  height: 18px;
  border: 3px solid #06a9f4;
  border-radius: 50%;
  background: #8a8080;
  box-shadow: inset 0 0 0 1px #222;
}

.dot.bad {
  border-color: #950000;
}

.pawn {
  left: 39px;
  top: 422px;
  width: 324px;
  height: 79px;
}

.pawn .row {
  height: 40px;
}

.num {
  width: 38px;
  height: 26px;
  border: 2px solid #b5b5b5;
  border-radius: 3px;
  color: #fff;
  text-align: center;
}

.num.one {
  width: 24px;
  height: 24px;
  color: #c0c0c0;
}

.branch {
  left: 669px;
  top: 108px;
  width: 224px;
  height: 112px;
}

.cast {
  left: 943px;
  top: 255px;
  width: 254px;
  height: 160px;
  outline: 5px solid #e79507;
}

.cast .row {
  padding-left: 13px;
  padding-right: 13px;
}

.bubble {
  position: absolute;
  left: 1293px;
  top: 87px;
}

.launch {
  left: 1279px;
  top: 108px;
  width: 304px;
  height: 279px;
}

.launch .row {
  padding-left: 13px;
}

.row.vec {
  height: 64px;
  gap: 7px;
}

.xyz {
  display: flex;
  gap: 11px;
  padding-left: 13px;
  color: #666;
}

.row.check {
  height: 40px;
}

.check .in input {
  appearance: none;
  width: 24px;
  height: 22px;
  border: 1px solid #393939;
  border-radius: 3px;
  background: #111;
}

.tooltip {
  position: absolute;
  left: 831px;
  top: 387px;
  width: 785px;
  height: 135px;
  padding: 15px 12px 0 13px;
  background: #efefef;
  border: 2px solid #222;
  color: #000;
  font-size: 18px;
  line-height: 21px;
  white-space: nowrap;
}

.tooltip p + p {
  margin-top: 20px;
}

.tooltip p + .hint {
  margin-top: 0;
  color: #ccc;
  text-align: right;
}

/* status bar */
.status {
  display: flex;
  flex: none;
  gap: 3px;
  height: 48px;
  padding: 0 4px 0 2px;
}

.seg {
  display: flex;
  align-items: center;
  justify-content: flex-start;
  gap: 6px;
  background: #242424;
}

.drawer {
  width: 180px;
  gap: 5px;
  padding-left: 15px;
}

.log {
  width: 140px;
  gap: 8px;
  padding-left: 17px;
}

.cmd {
  width: 550px;
  gap: 19px;
  padding: 0 14px 0 21px;
}

.cmd button {
  gap: 6px;
}

.cmd .gap {
  margin-left: 6px;
}

.cmd input {
  flex: 1;
  height: 33px;
  padding: 0 10px;
  background: #0f0f0f;
  border: 2px solid #333;
  border-radius: 5px;
  font-size: 18px;
}

.fill {
  flex: 1;
}

.source {
  position: relative;
  width: 192px;
  gap: 7px;
  padding-left: 18px;
}

.source i {
  position: absolute;
  right: 11px;
  bottom: 9px;
  border: 5px solid transparent;
  border-right-color: #777;
  border-bottom-color: #777;
}

/* windows taskbar */
.taskbar {
  position: relative;
  display: flex;
  flex: none;
  gap: 1px;
  height: 60px;
  background: linear-gradient(90deg, #2d2a35, #282734 20%, #352830 40%, #2b2933 50%, #292938 70%, #30262f 83%, #1e1f33 94%, #252433);
}

.taskbar button {
  width: 74px;
  position: relative;
}

.taskbar button:first-child {
  width: 72px;
}

.open::after {
  content: "";
  position: absolute;
  left: 6px;
  right: 6px;
  bottom: 0;
  height: 3px;
  background: #66b6d9;
}

.current {
  background: #5b5963;
}

.current::after {
  left: 0;
  right: 0;
}

.epic, .games {
  fill: #fff;
  font: bold 14px Roboto, sans-serif;
  text-anchor: middle;
}

.games {
  font-size: 8px;
}

.mm {
  fill: #0f75c8;
  font: bold 20px Roboto, sans-serif;
  text-anchor: middle;
}

.tray {
  display: flex;
  align-items: center;
  gap: 12px;
  margin-left: auto;
  padding-right: 30px;
  border-right: 2px solid #77757d;
  margin-right: 6px;
  color: #fff;
}

.tray b {
  font-weight: 500;
}

.tray time {
  width: 96px;
  margin: 0 14px 0 4px;
  font: 20px/28px "Open Sans", sans-serif;
  text-align: center;
}

.credit {
  position: absolute;
  right: 16px;
  bottom: 4px;
  color: #a9a9ac;
  font: 19px/26px "Noto Sans", sans-serif;
}
```
